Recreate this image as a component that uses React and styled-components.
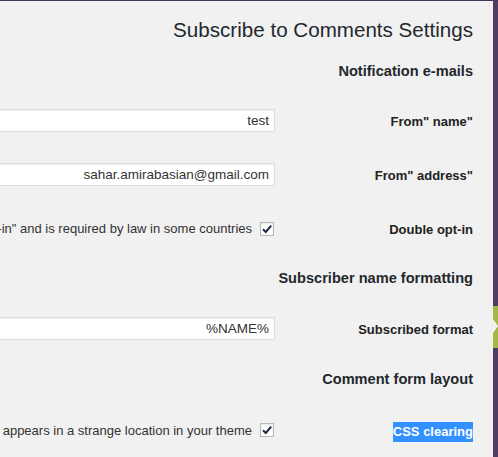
import styled, { createGlobalStyle } from "styled-components";

const GlobalStyle = createGlobalStyle`
    html, body {
        margin: 0;
        padding: 0;
        background: #f1f1f1;
        overflow: hidden;
    }
`;

const settings = [
    { type: "heading", text: "Notification e-mails", height: 46 },
    { type: "input", label: 'From" name"', value: "test" },
    { type: "input", label: 'From" address"', value: "sahar.amirabasian@gmail.com" },
    { type: "check", label: "Double opt-in", text: 'Send a confirmation e-mail to new subscribers. This is also known as "double opt-in" and is required by law in some countries' },
    { type: "heading", text: "Subscriber name formatting", height: 46 },
    { type: "input", label: "Subscribed format", value: "%NAME%" },
    { type: "heading", text: "Comment form layout", height: 48 },
    { type: "check", label: "CSS clearing", text: "Check this option if the subscription checkbox appears in a strange location in your theme", selected: true },
];

const Check = () => (
    <svg width="12" height="12" viewBox="0 0 12 12">
        <path d="M2 6.2 L4.8 9 L10.2 2.6" fill="none" stroke="#1d2a44" strokeWidth="2" />
    </svg>
);

const App = () => {
    return (
        <>
            <GlobalStyle />
            <Page>
                <Content>
                    <Title>Subscribe to Comments Settings</Title>
                    {settings.map((item, i) => {
                        if (item.type === "heading") {
                            return (
                                <SectionHeading key={i} $height={item.height}>
                                    {item.text}
                                </SectionHeading>
                            );
                        }
                        return (
                            <Row key={i}>
                                <Field>
                                    {item.type === "input" ? (
                                        <Input readOnly value={item.value} />
                                    ) : (
                                        <CheckLabel>
                                            <span>{item.text}</span>
                                            <Box>
                                                <Check />
                                            </Box>
                                        </CheckLabel>
                                    )}
                                </Field>
                                <Label>
                                    <LabelText $selected={item.selected}>{item.label}</LabelText>
                                </Label>
                            </Row>
                        );
                    })}
                </Content>
                <Menu>
                    <MenuTop />
                    <CurrentItem>
                        <svg width="5" height="42" viewBox="0 0 5 42">
                            <rect x="0" y="0" width="5" height="42" fill="#a3b745" />
                            <path d="M0 13 L5 20 L0 27 Z" fill="#f1f1f1" />
                        </svg>
                    </CurrentItem>
                    <MenuRest />
                </Menu>
            </Page>
        </>
    );
};

const Page = styled.div`
    display: flex;
    width: 498px;
    height: 457px;
    border-top: 1px solid #463655;
    box-sizing: border-box;
    overflow: hidden;
    font-family: "Liberation Sans", Arial, sans-serif;
    color: #222;
`;

const Content = styled.main`
    flex: 1;
    display: flex;
    flex-direction: column;
    align-items: flex-end;
    padding-right: 20px;
    min-width: 0;
`;

const Title = styled.h2`
    margin: 0;
    padding-top: 15px;
    height: 32px;
    font-size: 20.6px;
    line-height: 28px;
    font-weight: 400;
    color: #23282d;
    white-space: nowrap;
`;

const SectionHeading = styled.h3`
    margin: 0;
    height: ${(p) => p.$height}px;
    display: flex;
    align-items: center;
    font-size: 14.6px;
    font-weight: 700;
    color: #23282d;
    white-space: nowrap;
`;

const Row = styled.div`
    height: 54px;
    display: flex;
    align-items: center;
    justify-content: flex-end;
    width: 100%;
`;

const Field = styled.div`
    flex: 0 0 auto;
    display: flex;
    justify-content: flex-end;
    width: 600px;
`;

const Label = styled.div`
    flex: 0 0 198px;
    display: flex;
    justify-content: flex-end;
    padding-top: 3px;
    font-size: 13px;
    font-weight: 700;
    color: #222;
    white-space: nowrap;
`;

const LabelText = styled.span`
    padding: 2px 0 3px;
    background: ${(p) => (p.$selected ? "#3390ff" : "transparent")};
    color: ${(p) => (p.$selected ? "#fff" : "#222")};
`;

const Input = styled.input`
    width: 340px;
    height: 23px;
    box-sizing: border-box;
    border: 1px solid #dddddd;
    box-shadow: inset 0 1px 2px rgba(0, 0, 0, 0.07);
    background: #fff;
    padding: 0 5px;
    text-align: right;
    font-family: "Liberation Sans", Arial, sans-serif;
    font-size: 13.5px;
    color: #333;
    outline: none;
`;

const CheckLabel = styled.label`
    display: flex;
    align-items: center;
    gap: 8px;
    font-size: 13px;
    color: #333;
    white-space: nowrap;
`;

const Box = styled.span`
    width: 14px;
    height: 14px;
    box-sizing: border-box;
    border: 1px solid #b4b9be;
    background: #fff;
    box-shadow: inset 0 1px 2px rgba(0, 0, 0, 0.1);
    display: grid;
    place-items: center;
    margin-right: 1px;
`;

const Menu = styled.nav`
    flex: 0 0 5px;
    display: flex;
    flex-direction: column;
    background: #4f3d63;
`;

const MenuTop = styled.div`
    height: 305px;
`;

const CurrentItem = styled.div`
    height: 42px;
    display: flex;
`;

const MenuRest = styled.div`
    flex: 1;
`;

export default App;
